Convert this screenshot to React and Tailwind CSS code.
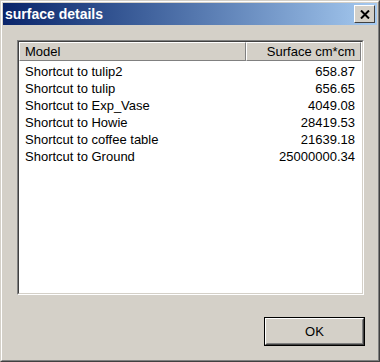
import React from "react";

const rows = [
  { model: "Shortcut to tulip2", surface: "658.87" },
  { model: "Shortcut to tulip", surface: "656.65" },
  { model: "Shortcut to Exp_Vase", surface: "4049.08" },
  { model: "Shortcut to Howie", surface: "28419.53" },
  { model: "Shortcut to coffee table", surface: "21639.18" },
  { model: "Shortcut to Ground", surface: "25000000.34" },
];

const App = () => {
  return (
    <div
      className="w-[380px] h-[362px] bg-[#d4d0c8] border border-t-[#d4d0c8] border-l-[#d4d0c8] border-r-[#404040] border-b-[#404040] text-black text-[13px]"
      style={{ fontFamily: '"Liberation Sans", Arial, sans-serif' }}
    >
      <div className="h-full border border-t-white border-l-white border-r-[#808080] border-b-[#808080] p-px flex flex-col">
        {/* title bar */}
        <div className="h-[22px] flex items-center justify-between pl-[2px] pr-[2px] bg-gradient-to-r from-[#0a246a] to-[#a6caf0]">
          <span className="text-white font-bold text-[14px] leading-none">surface details</span>
          <button className="w-[21px] h-[18px] bg-[#d4d0c8] border border-t-white border-l-white border-r-[#404040] border-b-[#404040] flex items-center justify-center">
            <svg width="10" height="9" viewBox="0 0 10 9">
              <path d="M1 0.5 L9 8.5 M9 0.5 L1 8.5" stroke="black" strokeWidth="2" />
            </svg>
          </button>
        </div>

        <div className="flex-1 flex flex-col pl-[14px] pr-[13px] pt-[15px]">
          {/* list view */}
          <div className="h-[255px] border border-t-[#808080] border-l-[#808080] border-r-white border-b-white">
            <div className="h-full border border-t-[#404040] border-l-[#404040] border-r-[#d4d0c8] border-b-[#d4d0c8] bg-white">
              <div className="flex h-[19px] pr-[1px]">
                <div className="w-[227px] bg-[#d4d0c8] border border-t-white border-l-white border-r-[#808080] border-b-[#808080] flex items-center pl-[5px]">
                  Model
                </div>
                <div className="w-[115px] bg-[#d4d0c8] border border-t-white border-l-white border-r-[#808080] border-b-[#808080] flex items-center justify-end pr-[5px]">
                  Surface cm*cm
                </div>
              </div>
              <div className="pt-[2px]">
                {rows.map((r) => (
                  <div key={r.model} className="flex h-[17px] items-center">
                    <div className="w-[227px] pl-[6px]">{r.model}</div>
                    <div className="w-[115px] pr-[6px] text-right">{r.surface}</div>
                  </div>
                ))}
              </div>
            </div>
          </div>

          <div className="flex justify-end pt-[22px]">
            <button className="w-[101px] h-[29px] border border-black bg-[#d4d0c8] mr-[-1px]">
              <div className="h-full border border-t-white border-l-white border-r-[#404040] border-b-[#404040]">
                <div className="h-full border border-t-[#d4d0c8] border-l-[#d4d0c8] border-r-[#808080] border-b-[#808080] flex items-center justify-center">
                  OK
                </div>
              </div>
            </button>
          </div>
        </div>
      </div>
    </div>
  );
};

export default App;
